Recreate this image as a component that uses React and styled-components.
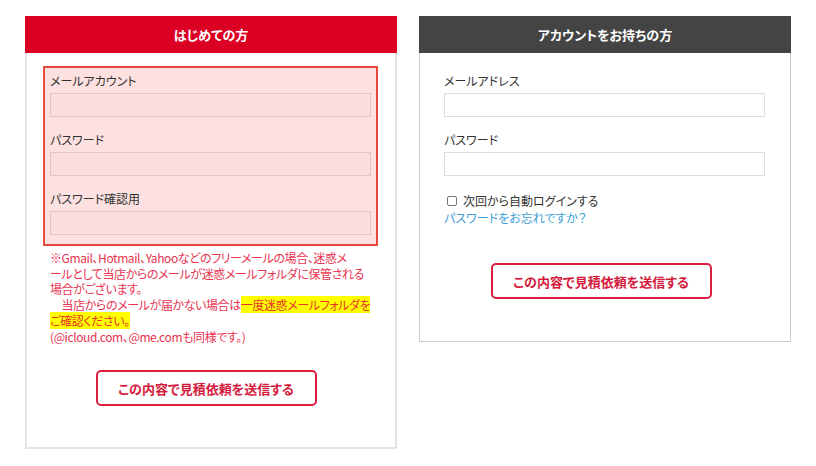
import React from "react";
import styled, { createGlobalStyle } from "styled-components";

const Global = createGlobalStyle`
  html, body { margin: 0; padding: 0; background: #fff; }
  body {
    font-family: "Noto Sans CJK JP", "Noto Sans", sans-serif;
    font-feature-settings: "palt";
    color: #333;
  }
  * { box-sizing: border-box; }
`;

const Page = styled.div`
  display: flex;
  align-items: flex-start;
  gap: 22px;
  padding: 16px 0 0 25px;
`;

const Panel = styled.section`
  width: 372px;
  background: #fff;
  border: ${(p) => p.$bw}px solid ${(p) => p.$bc};
  border-top: none;
`;

const Header = styled.h2`
  margin: 0 ${(p) => -p.$bw}px;
  height: 37px;
  line-height: 37px;
  text-align: center;
  font-size: 13px;
  font-weight: 700;
  color: #fff;
  background: ${(p) => p.$bg};
`;

const Body = styled.div`
  padding: ${(p) => p.$pad};
`;

const ErrorBox = styled.div`
  border: 2px solid #e8473a;
  background: #fde0e0;
  padding: 3px 5px 9px 5px;
`;

const Label = styled.div`
  font-size: 12px;
  line-height: 20px;
  color: #333;
  margin-top: 13px;
  &:first-child { margin-top: 0; }
`;

const Input = styled.input`
  display: block;
  width: 100%;
  height: 24px;
  margin: 2px 0 0;
  padding: 0 6px;
  border: 1px solid ${(p) => (p.$tint ? "#e6c3c3" : "#dcdcdc")};
  background: ${(p) => (p.$tint ? "#fcdcdc" : "#fff")};
  outline: none;
`;

const Notes = styled.p`
  margin: 4px 0 0;
  padding-left: 7px;
  font-size: 12px;
  line-height: 15.7px;
  letter-spacing: -0.4px;
  color: #e8334f;
  white-space: pre;
`;

const Mark = styled.span`
  background: #ffff00;
  color: #e5352a;
`;

const ButtonWrap = styled.div`
  display: flex;
  justify-content: center;
  margin-top: ${(p) => p.$mt}px;
  padding-right: ${(p) => p.$pr}px;
`;

const SubmitButton = styled.button`
  width: 221px;
  height: 36px;
  border: 2px solid #dc1e40;
  border-radius: 5px;
  background: #fff;
  color: #d41a3c;
  font-family: inherit;
  font-feature-settings: "palt";
  font-size: 13px;
  font-weight: 700;
  cursor: pointer;
`;

const CheckRow = styled.label`
  display: flex;
  align-items: center;
  margin-top: 16px;
  font-size: 12px;
  line-height: 17px;
  color: #333;
`;

const Check = styled.input`
  appearance: none;
  width: 10px;
  height: 10px;
  margin: 1px 6px 0 3px;
  border: 1px solid #767676;
  border-radius: 2px;
  background: #fff;
`;

const ForgotLink = styled.a`
  display: block;
  font-size: 12px;
  line-height: 17px;
  color: #3d9fd6;
  text-decoration: none;
`;

export default function App() {
  return (
    <>
      <Global />
      <Page>
        <Panel $bw={2} $bc="#e3e3e3">
          <Header $bg="#db0023" $bw={2}>はじめての方</Header>
          <Body $pad="13px 17px 41px 16px">
            <ErrorBox>
              <Label>メールアカウント</Label>
              <Input $tint type="text" />
              <Label>パスワード</Label>
              <Input $tint type="password" />
              <Label>パスワード確認用</Label>
              <Input $tint type="password" />
            </ErrorBox>
            <Notes>
              {"※Gmail、Hotmail、Yahooなどのフリーメールの場合、迷惑メ"}
              <br />
              {"ールとして当店からのメールが迷惑メールフォルダに保管される"}
              <br />
              {"場合がございます。"}
              <br />
              {"\u3000当店からのメールが届かない場合は"}
              <Mark>一度迷惑メールフォルダを</Mark>
              <br />
              <Mark>ご確認ください。</Mark>
              <br />
              {"(@icloud.com、@me.comも同様です。)"}
            </Notes>
            <ButtonWrap $mt={26} $pr={9}>
              <SubmitButton type="button">この内容で見積依頼を送信する</SubmitButton>
            </ButtonWrap>
          </Body>
        </Panel>
        <Panel $bw={1} $bc="#cccccc">
          <Header $bg="#444444" $bw={1}>アカウントをお持ちの方</Header>
          <Body $pad="18px 25px 42px 24px">
            <Label>メールアドレス</Label>
            <Input type="text" />
            <Label>パスワード</Label>
            <Input type="password" />
            <CheckRow>
              <Check type="checkbox" />
              次回から自動ログインする
            </CheckRow>
            <ForgotLink href="#">パスワードをお忘れですか？</ForgotLink>
            <ButtonWrap $mt={37} $pr={7}>
              <SubmitButton type="button">この内容で見積依頼を送信する</SubmitButton>
            </ButtonWrap>
          </Body>
        </Panel>
      </Page>
    </>
  );
}
